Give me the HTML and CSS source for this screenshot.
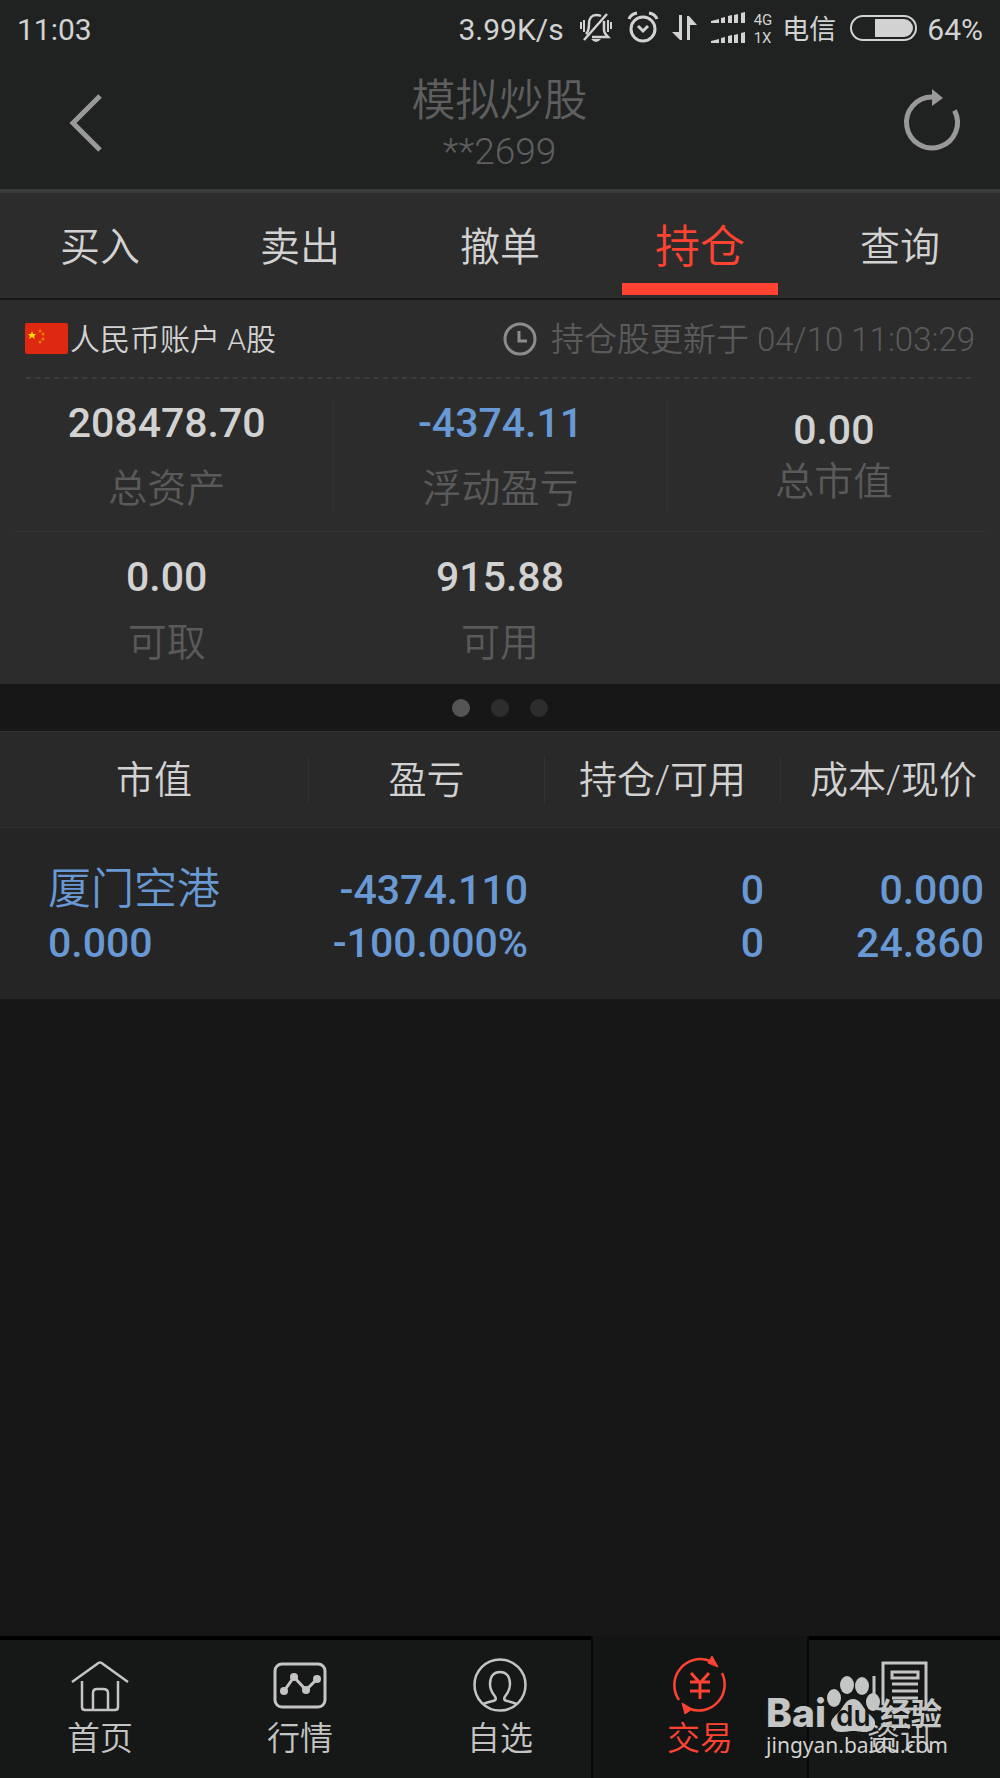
FILE: index.html
```html
<!DOCTYPE html>
<html lang="zh-CN">
<head>
<meta charset="utf-8">
<meta name="viewport" content="width=device-width, initial-scale=1">
<title>模拟炒股</title>
<link rel="stylesheet" href="styles.css">
</head>
<body>
<header class="top">
  <div class="status">
    <span class="clock">11:03</span>
    <span class="speed">3.99K/s</span>
    <svg class="bell" width="32" height="32" viewBox="0 0 32 32" fill="none" stroke="#d2d2d2" stroke-width="2.500"><path d="M6 22C9 19 9 16 9 12C9 6 12 3 16 3Q19 3 21 4M24 9V18C24 21 26 23 28 25H12M4 28L27 2"/><path d="M1 10V17M4 8V20M31 10V17M28 8V20" stroke-width="2"/><path d="M11 27H21Q16 33 11 27Z" fill="#d2d2d2" stroke="none"/></svg>
    <svg class="alarm" width="30" height="32" viewBox="0 0 30 32" fill="none" stroke="#d2d2d2" stroke-width="3"><circle cx="15" cy="17" r="12"/><path d="M10 14L15 19L20 14M1 7Q3 2 9 1M29 7Q27 2 21 1"/></svg>
    <svg class="updown" width="25" height="26" viewBox="0 0 25 26" fill="#d2d2d2"><path d="M7 0H10V25H8L0 17H7ZM15 25H18V10H25L17 1H15Z"/></svg>
    <svg class="signal" width="35" height="32" viewBox="0 0 35 32" fill="#d2d2d2"><path d="M0 9L8 7V11H0ZM10 6L14 5V11H10ZM17 4L21 3V11H17ZM23 3L27 2V11H23ZM30 1L34 0V11H30Z"/><path d="M0 29L8 27V31H0ZM10 26L14 25V31H10ZM17 24L21 23V31H17ZM23 23L27 22V31H23ZM30 21L34 20V31H30Z"/></svg>
    <span class="net"><span>4G</span><span>1X</span></span>
    <span class="carrier">电信</span>
    <svg class="battery" width="67" height="26" viewBox="0 0 67 26"><rect x="1" y="1" width="65" height="24" rx="12" fill="none" stroke="#d2d2d2" stroke-width="2"/><path d="M25 4H54A9 9 0 0 1 54 22H25Z" fill="#d2d2d2"/></svg>
    <span class="charge">64%</span>
  </div>
  <div class="titlebar">
    <button class="icon-button" aria-label="返回"><svg width="34" height="60" viewBox="0 0 34 60" fill="none" stroke="#999" stroke-width="5"><path d="M31 3L4 30L31 57"/></svg></button>
    <div class="heading"><h1>模拟炒股</h1><p>**2699</p></div>
    <button class="icon-button" aria-label="刷新"><svg width="56" height="64" viewBox="0 0 56 64"><path d="M28 6A25.500 25.500 0 1 0 50.500 19.500" fill="none" stroke="#999" stroke-width="5"/><path d="M28 -2L39 7L28 15Z" fill="#999"/></svg></button>
  </div>
</header>

<nav class="tabs">
  <a href="#buy">买入</a>
  <a href="#sell">卖出</a>
  <a href="#cancel">撤单</a>
  <a href="#holdings" class="active" aria-current="page">持仓</a>
  <a href="#query">查询</a>
</nav>

<main>
  <section class="summary">
    <div class="account">
      <svg class="flag" width="43" height="31" viewBox="0 0 43 31"><rect width="43" height="31" rx="2" fill="#de2910"/><path d="M7 8L8 11H11L9 13L10 16L7 14L4 16L5 13L3 11H6Z" fill="#ffde00"/><g fill="#e8790b"><circle cx="15" cy="8" r="1.500"/><circle cx="18" cy="11" r="1.500"/><circle cx="18" cy="16" r="1.500"/><circle cx="15" cy="19" r="1.500"/></g></svg>
      <span class="account-name">人民币账户 A股</span>
      <svg class="time-icon" width="34" height="34" viewBox="0 0 34 34" fill="none" stroke="#8c8c8c" stroke-width="3"><circle cx="17" cy="17" r="15"/><path d="M16 9V19H24"/></svg>
      <span class="updated">持仓股更新于 04/10 11:03:29</span>
    </div>
    <div class="dashes"><svg width="100%" height="2"><path d="M0 1H3000" stroke="#3d3d3d" stroke-width="2" stroke-dasharray="5 4.400"/></svg></div>
    <div class="stats">
      <div class="stat"><b>208478.70</b><span>总资产</span></div>
      <div class="stat"><b class="loss">-4374.11</b><span>浮动盈亏</span></div>
      <div class="stat compact"><b>0.00</b><span>总市值</span></div>
    </div>
    <hr class="rule">
    <div class="stats second">
      <div class="stat"><b>0.00</b><span>可取</span></div>
      <div class="stat"><b>915.88</b><span>可用</span></div>
    </div>
  </section>

  <div class="pager"><i class="on"></i><i></i><i></i></div>

  <table class="holdings">
    <thead><tr><th><span>市值</span></th><th><span>盈亏</span></th><th><span>持仓/可用</span></th><th><span>成本/现价</span></th></tr></thead>
    <tbody><tr><td><span class="stock">厦门空港</span><br>0.000</td><td>-4374.110<br>-100.000%</td><td>0<br>0</td><td>0.000<br>24.860</td></tr></tbody>
  </table>
</main>

<footer class="bottom">
  <a href="#home"><svg width="58" height="60" viewBox="0 0 58 60" fill="none" stroke="#c4c4c4" stroke-width="2.500"><path d="M1 26L26 8Q29 5 32 8L57 26M11 25V51Q11 54 14 54H44Q47 54 47 51V25M22 54V37Q22 33 26 33H32Q37 33 37 37V54"/></svg><span>首页</span></a>
  <a href="#market"><svg width="54" height="60" viewBox="0 0 54 60" fill="none" stroke="#c4c4c4" stroke-width="3"><rect x="2" y="8" width="50" height="43" rx="7"/><path d="M11 35L21 21L33 34L44 23"/><g fill="#c4c4c4" stroke="none"><circle cx="11" cy="35" r="4"/><circle cx="21" cy="21" r="4"/><circle cx="33" cy="34" r="4"/><circle cx="44" cy="23" r="4"/></g></svg><span>行情</span></a>
  <a href="#watchlist"><svg width="54" height="60" viewBox="0 0 54 60" fill="none" stroke="#c4c4c4" stroke-width="2.500"><circle cx="27" cy="29" r="25.500"/><path d="M10 48Q15 46 20 45Q25 44 21 39Q17 34 17 28C17 20 21 16 27 16S37 20 37 28Q37 34 33 39Q29 44 34 45Q39 46 44 48"/></svg><span>自选</span></a>
  <a href="#trade" class="active" aria-current="page"><svg width="56" height="60" viewBox="0 0 56 60" fill="none" stroke="#ff4332" stroke-width="2.500"><path d="M38 5A26 26 0 0 0 7 44M18 53A26 26 0 0 0 50 17"/><path d="M40 0L46 11L36 7ZM10 47L20 53L13 58Z" fill="#ff4332" stroke-width="1"/><path d="M19 17L28 27L37 17M18 26H38M18 35H38M28 26V43" stroke-width="3"/></svg><span>交易</span></a>
  <a href="#news"><svg width="56" height="60" viewBox="0 0 56 60" fill="none" stroke="#c4c4c4" stroke-width="3"><path d="M2 20V47Q2 53 8 53H54V7H11V49M20 16H46V22H20ZM20 28H46M20 35H46M20 42H46"/></svg><span>资讯</span></a>
  <div class="watermark">
    <div class="brand"><span class="bai">Bai</span><span class="paw"><svg width="54" height="56" viewBox="0 0 54 56" fill="#c4c6c5"><ellipse cx="8" cy="22" rx="7" ry="9"/><ellipse cx="21" cy="9" rx="7" ry="9"/><ellipse cx="36" cy="10" rx="7" ry="9"/><ellipse cx="47" cy="26" rx="7" ry="9"/><path d="M27 23C34 23 36 30 41 36C46 41 50 43 49 49C48 54 44 56 39 56C33 56 31 55 27 55S21 56 15 56C9 56 6 53 5 48C5 43 9 40 13 36C18 30 20 23 27 23Z"/></svg><span class="du">du</span></span><span class="jingyan">经验</span></div>
    <div class="site">jingyan.baidu.com</div>
  </div>
</footer>
</body>
</html>
```
FILE: styles.css
```css
* { box-sizing: border-box; }

body {
  margin: 0;
  min-height: 100vh;
  display: flex;
  flex-direction: column;
  background: #171717;
  color: #d2d2d2;
  font-family: Roboto, "Noto Sans CJK SC", sans-serif;
  font-weight: 350;
}

a { color: inherit; text-decoration: none; }
svg { display: block; flex: none; overflow: visible; }

/* Status bar and title */
.top { background: #202221; }
.status {
  display: flex;
  align-items: center;
  height: 56px;
  padding: 0 17px;
  font-size: 30px;
  font-weight: 400;
  line-height: 36px;
}
.clock, .speed, .carrier, .charge { padding-top: 4px; }
.speed { margin-left: auto; }
.bell { margin-left: 16px; }
.alarm { margin-left: 16px; }
.updown { margin-left: 14px; }
.signal { margin-left: 14px; }
.net {
  display: flex;
  flex-direction: column;
  margin-left: 8px;
  padding-top: 2px;
  font-size: 15px;
  line-height: 18px;
}
.carrier { margin-left: 10px; font-size: 27px; }
.battery { margin-left: 14px; }
.charge { margin-left: 10px; }

.titlebar {
  display: flex;
  justify-content: space-between;
  align-items: center;
  height: 133px;
  padding: 0 40px 0 69px;
}
.icon-button {
  display: flex;
  width: 56px;
  padding: 0;
  border: 0;
  background: none;
}
.heading { text-align: center; color: #5e5e5e; margin-left: -30px; padding-top: 4px; }
.heading h1 { margin: 0; font-size: 44px; line-height: 54px; font-weight: 350; }
.heading p { margin: 0; font-size: 37px; line-height: 48px; font-weight: 350; }

/* Section tabs */
.tabs {
  display: flex;
  height: 111px;
  border-top: 4px solid #3a3a3a;
  border-bottom: 2px solid #171717;
  background: #2c2c2c;
  font-size: 40px;
}
.tabs a {
  flex: 1;
  display: flex;
  flex-direction: column;
  align-items: center;
  padding-top: 26px;
  line-height: 58px;
}
.tabs .active { color: #ff4332; font-size: 45px; }
.tabs .active::after {
  content: "";
  width: 78%;
  height: 12px;
  margin-top: 6px;
  background: #ff4332;
}

/* Account summary */
.summary { background: #2c2c2c; }
.account {
  display: flex;
  align-items: center;
  height: 77px;
  padding: 0 25px;
  line-height: 40px;
}
.account-name { margin-left: 2px; padding-top: 2px; font-size: 30px; }
.time-icon { margin-left: auto; }
.updated { margin-left: 14px; padding-top: 2px; font-size: 33px; color: #5a5a5a; }
.dashes { padding: 0 26px; overflow: hidden; }
.dashes svg { overflow: hidden; }

.stats {
  display: grid;
  grid-template-columns: repeat(3, 1fr);
  padding: 20px 0 18px;
}
.stats.second { padding: 21px 0 17px; }
.rule { margin: 0 14px; border: 0; border-top: 1px solid #323232; }
.stat {
  display: flex;
  flex-direction: column;
  justify-content: center;
  align-items: center;
  gap: 18px;
  line-height: 48px;
}
.stats:not(.second) .stat + .stat { border-left: 1px solid #323232; }
.compact { gap: 4px; }
.stat b { font-size: 41px; font-weight: 500; }
.stat b.loss { color: #6899d4; }
.stat span { font-size: 39px; color: #5a5a5a; }

.pager {
  display: flex;
  justify-content: center;
  align-items: center;
  gap: 21px;
  height: 47px;
}
.pager i { width: 18px; height: 18px; border-radius: 50%; background: #2d2d2d; }
.pager .on { background: #555; }

/* Holdings */
.holdings { width: 100%; table-layout: fixed; border-collapse: collapse; }
.holdings thead { background: #292929; border-top: 1px solid #313131; border-bottom: 1px solid #313131; }
.holdings th { padding: 0; height: 96px; font-size: 38px; font-weight: 350; }
.holdings th:first-child { width: 30.8%; }
.holdings th:nth-child(2), .holdings th:nth-child(3) { width: 23.6%; }
.holdings th:last-child { padding-left: 4px; }
.holdings th span { display: block; line-height: 50px; }
.holdings th + th span { border-left: 1px solid #313131; }
.holdings th:last-child span { margin-left: -4px; padding-left: 6px; }
.holdings tbody { background: #252525; }
.holdings td {
  padding: 36px 16px 29px 0;
  color: #6899d4;
  font-size: 41px;
  font-weight: 500;
  line-height: 53px;
  text-align: right;
}
.holdings td:first-child { padding-left: 48px; text-align: left; }
.stock { font-size: 43px; font-weight: 350; line-height: 1; }

/* Bottom navigation */
.bottom {
  position: relative;
  display: flex;
  height: 142px;
  margin-top: auto;
  border-top: 4px solid #000;
  background: #161817;
  color: #c4c4c4;
  font-size: 33px;
}
.bottom a {
  flex: none;
  width: 20%;
  display: flex;
  flex-direction: column;
  align-items: center;
  padding-top: 16px;
  line-height: 46px;
}
.bottom .active {
  width: calc(20% + 18px);
  margin: -4px -9px 0;
  padding-top: 20px;
  border: solid #080808;
  border-width: 0 2px;
  background: #131514;
  color: #ff4332;
}

/* Source mark lying over the navigation */
.watermark {
  position: absolute;
  right: 52px;
  bottom: 20px;
  color: #c4c6c5;
}
.brand { display: flex; align-items: flex-end; }
.bai { font: 800 39px/38px Inter, sans-serif; }
.paw { position: relative; }
.du { position: absolute; left: 10px; bottom: 2px; color: #161817; font: 600 28px/28px Inter, sans-serif; }
.jingyan { font-size: 31px; line-height: 34px; font-weight: 700; }
.site { font: 21px/26px "Noto Sans", sans-serif; color: #d2d2d2; }
```
